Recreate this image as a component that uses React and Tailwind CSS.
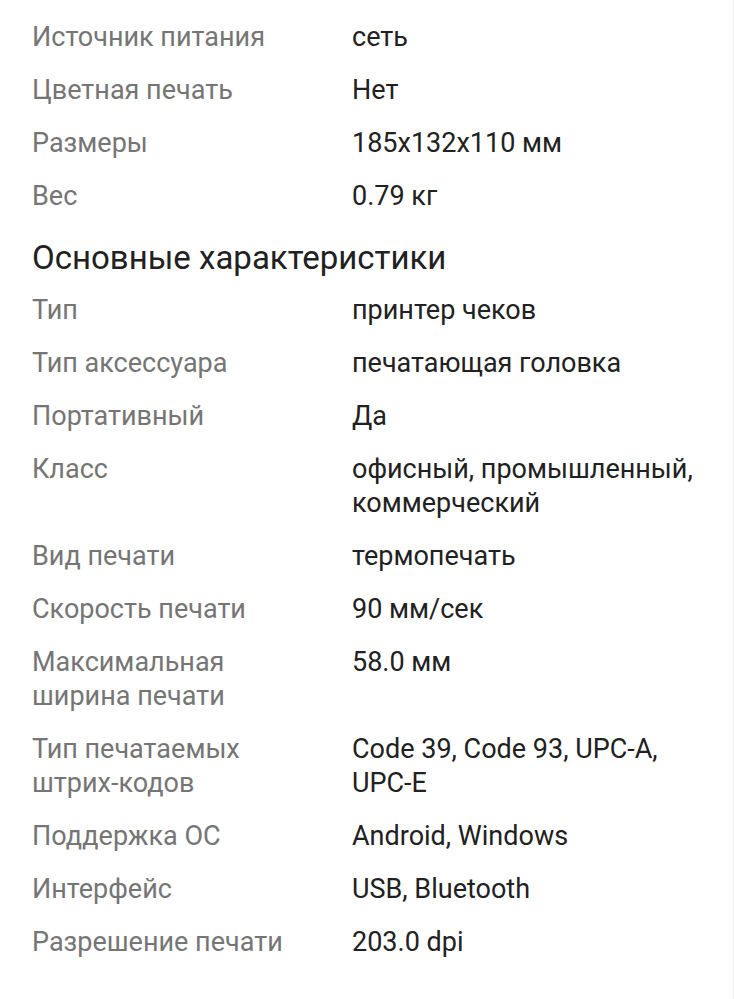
import React from "react";

const top = [
  ["Источник питания", ["сеть"]],
  ["Цветная печать", ["Нет"]],
  ["Размеры", ["185x132x110 мм"]],
  ["Вес", ["0.79 кг"]],
];

const main = [
  [["Тип"], ["принтер чеков"]],
  [["Тип аксессуара"], ["печатающая головка"]],
  [["Портативный"], ["Да"]],
  [["Класс"], ["офисный, промышленный,", "коммерческий"]],
  [["Вид печати"], ["термопечать"]],
  [["Скорость печати"], ["90 мм/сек"]],
  [["Максимальная", "ширина печати"], ["58.0 мм"]],
  [["Тип печатаемых", "штрих-кодов"], ["Code 39, Code 93, UPC-A,", "UPC-E"]],
  [["Поддержка ОС"], ["Android, Windows"]],
  [["Интерфейс"], ["USB, Bluetooth"]],
  [["Разрешение печати"], ["203.0 dpi"]],
];

function Row({ label, value }) {
  const l = Array.isArray(label) ? label : [label];
  return (
    <div className="flex">
      <div className="w-[320px] shrink-0 text-[#757575]">
        {l.map((t, i) => (
          <div key={i}>{t}</div>
        ))}
      </div>
      <div className="text-[#212121] whitespace-nowrap">
        {value.map((t, i) => (
          <div key={i}>{t}</div>
        ))}
      </div>
    </div>
  );
}

export default function App() {
  return (
    <div
      className="w-[734px] h-[999px] bg-white border-r border-[#ececec] overflow-hidden pl-8 pt-5 text-[27px] leading-[34px]"
      style={{ fontFamily: "Roboto, 'Noto Sans', sans-serif" }}
    >
      <div className="flex flex-col gap-[19px]">
        {top.map(([l, v]) => (
          <Row key={l} label={l} value={v} />
        ))}
      </div>
      <h2 className="mt-[25px] mb-[15px] text-[33px] leading-[40px] text-[#212121] font-normal">
        Основные характеристики
      </h2>
      <div className="flex flex-col gap-[19px]">
        {main.map(([l, v]) => (
          <Row key={l.join()} label={l} value={v} />
        ))}
      </div>
    </div>
  );
}
